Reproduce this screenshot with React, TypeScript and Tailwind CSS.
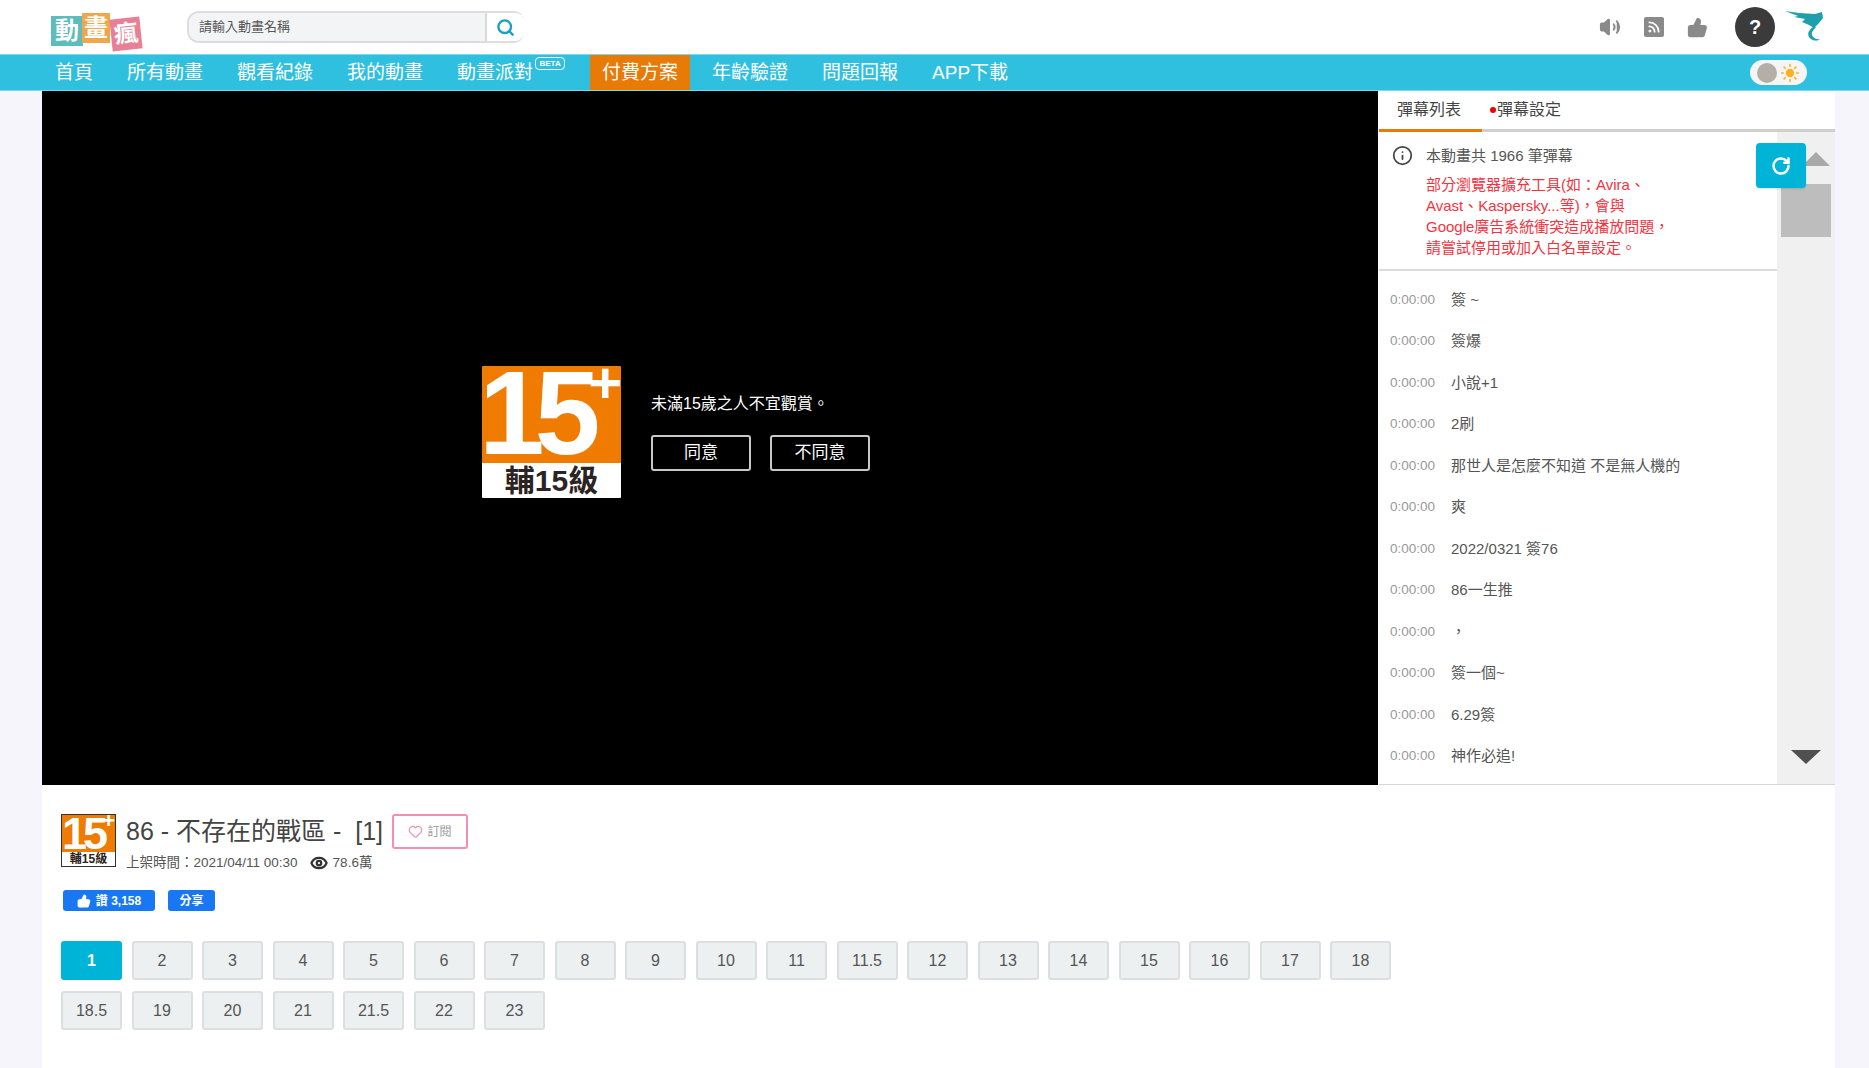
import { Search, Volume2, Rss, ThumbsUp, Sun, RotateCw, Info, Heart, Eye } from "lucide-react";

const navItems = ["年齡驗證", "問題回報", "APP下載"];
const danmu = ["簽 ~", "簽爆", "小說+1", "2刷", "那世人是怎麼不知道 不是無人機的", "爽", "2022/0321 簽76", "86一生推", "，", "簽一個~", "6.29簽", "神作必追!"];
const episodes = ["1", "2", "3", "4", "5", "6", "7", "8", "9", "10", "11", "11.5", "12", "13", "14", "15", "16", "17", "18", "18.5", "19", "20", "21", "21.5", "22", "23"];

function Logo() {
  return (
    <div className="flex ml-[51px] w-[92px] h-[40px] items-start text-white font-bold">
      <div className="w-[32px] h-[30px] mt-[9px] bg-[#5fbcbc] flex items-center justify-center text-[24px] leading-none">動</div>
      <div className="w-[28px] h-[30px] mt-[6px] -ml-[1px] bg-[#eda84f] flex items-center justify-center text-[24px] leading-none">畫</div>
      <div className="w-[30px] h-[32px] mt-[11px] ml-[1px] -rotate-6 bg-[#e77f96] flex items-center justify-center text-[24px] leading-none">瘋</div>
    </div>
  );
}

function Dragon() {
  return (
    <svg viewBox="0 0 40 34" className="w-[40px] h-[34px] ml-[10px]" fill="#1f9fae">
      <path d="M0 1 L14 3 L30 4 L37 2 L38 8 L34 13 L29 18 L24 15 L17 12 L20 9 L9 7 L13 6 Z" />
      <path d="M28 17 C22 21 22 26 26 29 C29 31 33 31 35 29 C32 30 28 28 27 25 C26 22 29 20 31 17 Z" />
    </svg>
  );
}

function RatingBadge({ big }: { big?: boolean }) {
  if (big) {
    return (
      <div className="w-[139px] h-[132px] flex flex-col rounded-[1px] overflow-hidden" style={{ fontFamily: "Liberation Sans, Noto Sans CJK TC, sans-serif" }}>
        <div className="relative h-[97px] bg-[#ef7b00] text-white font-bold overflow-hidden">
          <span className="absolute left-[-3px] top-[-12px] text-[118px] leading-[118px] tracking-[-10px]">15</span>
          <span className="absolute right-[-1px] top-[-12px] text-[58px] leading-[58px]">+</span>
        </div>
        <div className="h-[35px] bg-white text-[#2b2422] font-bold text-[30px] leading-[35px] text-center">輔15級</div>
      </div>
    );
  }
  return (
    <div className="w-[55px] h-[53px] flex flex-col border border-[#333] overflow-hidden">
      <div className="relative h-[38px] bg-[#ef7b00] text-white font-bold overflow-hidden">
        <span className="absolute left-[0px] top-[-4px] text-[45px] leading-[45px] tracking-[-4px]">15</span>
        <span className="absolute right-[0px] top-[-5px] text-[22px] leading-[22px]">+</span>
      </div>
      <div className="flex-1 bg-white text-[#2b2422] font-bold text-[12px] leading-[14px] text-center">輔15級</div>
    </div>
  );
}

function TopBar() {
  return (
    <header className="h-[54px] bg-white flex items-center">
      <Logo />
      <div className="ml-[44px] w-[337px] h-[32px] flex border-2 border-[#dddddf] border-r-0 rounded-l-[12px] rounded-r-[10px] overflow-hidden">
        <div className="w-[296px] bg-[#f3f4f6] pl-[10px] text-[13px] leading-[28px] text-[#555]">請輸入動畫名稱</div>
        <div className="flex-1 bg-white border-l-2 border-[#d8d8d8] flex items-center justify-center">
          <Search className="w-[19px] h-[19px] text-[#1b9fc4]" strokeWidth={3} />
        </div>
      </div>
      <div className="ml-auto mr-[44px] flex items-center">
        <Volume2 className="w-[22px] h-[22px] text-[#8a8a8a]" fill="#8a8a8a" />
        <Rss className="w-[20px] h-[20px] ml-[23px] p-[3px] bg-[#8a8a8a] rounded-[2px] text-white" strokeWidth={3} />
        <ThumbsUp className="w-[21px] h-[21px] ml-[23px] text-[#8a8a8a]" fill="#8a8a8a" />
        <div className="w-[40px] h-[40px] ml-[27px] rounded-full bg-[#3b3b3b] flex items-center justify-center text-white font-bold text-[20px]">?</div>
        <Dragon />
      </div>
    </header>
  );
}

function NavBar() {
  return (
    <nav className="h-[37px] bg-[#2fc0df] border-y border-[#7fd9ec] flex items-stretch pl-[38px] text-white text-[19px]">
      <a className="px-[17px] leading-[35px]">首頁</a>
      <a className="px-[17px] leading-[35px]">所有動畫</a>
      <a className="px-[17px] leading-[35px]">觀看紀錄</a>
      <a className="px-[17px] leading-[35px]">我的動畫</a>
      <a className="relative pl-[17px] w-[150px] leading-[35px]">
        動畫派對
        <span className="absolute left-[95px] top-[2px] w-[30px] h-[13px] border border-white rounded-[4px] text-[8px] leading-[11px] text-center font-bold">BETA</span>
      </a>
      <a className="w-[100px] text-center bg-[#e87a06] leading-[35px]">付費方案</a>
      <div className="flex ml-[5px]">
        {navItems.map((n) => (
          <a key={n} className="px-[17px] leading-[35px]">{n}</a>
        ))}
      </div>
      <div className="ml-auto mr-[62px] my-auto w-[57px] h-[25px] rounded-full bg-[#f5f5f5] flex items-center pl-[7px]">
        <span className="w-[20px] h-[20px] rounded-full bg-[#b5aea6]" />
        <Sun className="w-[20px] h-[20px] ml-[3px] text-[#ffb01f]" fill="#ffb01f" />
      </div>
    </nav>
  );
}

function VideoArea() {
  return (
    <div className="w-[1336px] h-[694px] bg-black flex items-center justify-center pr-[2px]">
      <div className="flex items-center -mt-[12px] -ml-[66px]">
        <RatingBadge big />
        <div className="ml-[30px] text-white">
          <p className="text-[16px] leading-[22px] mb-[20px]">未滿15歲之人不宜觀賞。</p>
          <div className="flex gap-[19px]">
            <button className="w-[100px] h-[36px] border-2 border-[#c8c8c8] rounded-[3px] text-[17px]">同意</button>
            <button className="w-[100px] h-[36px] border-2 border-[#c8c8c8] rounded-[3px] text-[17px]">不同意</button>
          </div>
        </div>
      </div>
    </div>
  );
}

function SidePanel() {
  return (
    <aside className="w-[456px] ml-[1px] h-[694px] flex flex-col bg-white border-b border-[#d5d5d5]">
      <div className="h-[41px] flex border-b-[3px] border-[#cfcfcf] text-[16px] text-[#444] relative">
        <div className="w-[103px] pl-[18px] leading-[38px] border-b-[3px] border-[#e87a06] h-[41px]">彈幕列表</div>
        <div className="ml-[8px] flex items-center h-[38px]">
          <span className="w-[6px] h-[6px] rounded-full bg-[#f00000] mr-[1px]" />
          彈幕設定
        </div>
      </div>
      <div className="flex-1 flex min-h-0">
        <div className="w-[398px] flex flex-col">
          <div className="h-[139px] border-b-2 border-[#dcdcdc] flex pl-[13px] pt-[13px]">
            <Info className="w-[21px] h-[21px] text-[#444]" />
            <div className="ml-[13px]">
              <p className="text-[15px] leading-[22px] text-[#555]">本動畫共 1966 筆彈幕</p>
              <p className="mt-[7px] text-[15px] leading-[21px] text-[#f5333f] w-[285px]">
                部分瀏覽器擴充工具(如：Avira、<br />
                Avast、Kaspersky...等)，會與<br />
                Google廣告系統衝突造成播放問題，<br />
                請嘗試停用或加入白名單設定。
              </p>
            </div>
          </div>
          <ul className="pt-[8px]">
            {danmu.map((d, i) => (
              <li key={i} className="h-[41.5px] flex items-center pl-[11px]">
                <span className="w-[61px] text-[13.5px] text-[#999]">0:00:00</span>
                <span className="text-[15px] text-[#555]">{d}</span>
              </li>
            ))}
          </ul>
        </div>
        <div className="relative flex-1 bg-[#f0f0f0] flex flex-col items-center">
          <div className="mt-[20px] w-0 h-0 ml-[20px] border-x-[14px] border-x-transparent border-b-[14px] border-b-[#a9a9a9]" />
          <div className="mt-[18px] w-[50px] h-[53px] bg-[#bdbdbd]" />
          <div className="mt-auto mb-[20px] w-0 h-0 border-x-[15px] border-x-transparent border-t-[14px] border-t-[#505050]" />
          <button className="absolute left-[-21px] top-[11px] w-[50px] h-[45px] bg-[#00b4d8] rounded-[4px] shadow flex items-center justify-center">
            <RotateCw className="w-[20px] h-[20px] text-white" strokeWidth={3} />
          </button>
        </div>
      </div>
    </aside>
  );
}

function InfoSection() {
  return (
    <section className="pl-[19px] pt-[29px] pb-[43px]">
      <div className="flex">
        <RatingBadge />
        <div className="ml-[10px]">
          <div className="flex items-center h-[35px]">
            <h1 className="text-[25px] text-[#444] whitespace-pre">86 - 不存在的戰區 -  [1]</h1>
            <button className="ml-[9px] w-[76px] h-[35px] border-2 border-[#f48fb1] rounded-[3px] flex items-center justify-center text-[12px] text-[#999]">
              <Heart className="w-[15px] h-[15px] text-[#f48fb1] mr-[4px]" />
              訂閱
            </button>
          </div>
          <div className="flex items-center mt-[5px] text-[13.5px] text-[#555] leading-[18px]">
            <span>上架時間：2021/04/11 00:30</span>
            <Eye className="w-[18px] h-[18px] ml-[12px] text-[#333]" strokeWidth={3} />
            <span className="ml-[5px]">78.6萬</span>
          </div>
        </div>
      </div>
      <div className="flex mt-[18px] ml-[2px] text-white text-[12px] font-bold">
        <span className="w-[92px] h-[21px] bg-[#1877f2] rounded-[3px] flex items-center justify-center">
          <ThumbsUp className="w-[14px] h-[14px] mr-[5px]" fill="white" />讚 3,158
        </span>
        <span className="w-[47px] h-[21px] ml-[13px] bg-[#1877f2] rounded-[3px] flex items-center justify-center">分享</span>
      </div>
      <div className="mt-[30px] w-[1340px] flex flex-wrap gap-x-[9.5px] gap-y-[11px]">
        {episodes.map((e) => (
          <button
            key={e}
            className={e === "1"
              ? "w-[61px] h-[39px] rounded-[3px] border-2 border-[#00b4d8] bg-[#00b4d8] text-white text-[16px] font-bold"
              : "w-[61px] h-[39px] rounded-[3px] border-2 border-[#dcdfe0] bg-[#ecf0f1] text-[#555] text-[16px]"}
          >
            {e}
          </button>
        ))}
      </div>
    </section>
  );
}

export default function App() {
  return (
    <div className="min-h-[1068px] bg-[#f6f5fb] overflow-hidden" style={{ fontFamily: "Liberation Sans, Noto Sans CJK TC, sans-serif" }}>
      <TopBar />
      <NavBar />
      <main className="ml-[42px] w-[1793px] bg-white h-[977px]">
        <div className="flex">
          <VideoArea />
          <SidePanel />
        </div>
        <InfoSection />
      </main>
    </div>
  );
}
